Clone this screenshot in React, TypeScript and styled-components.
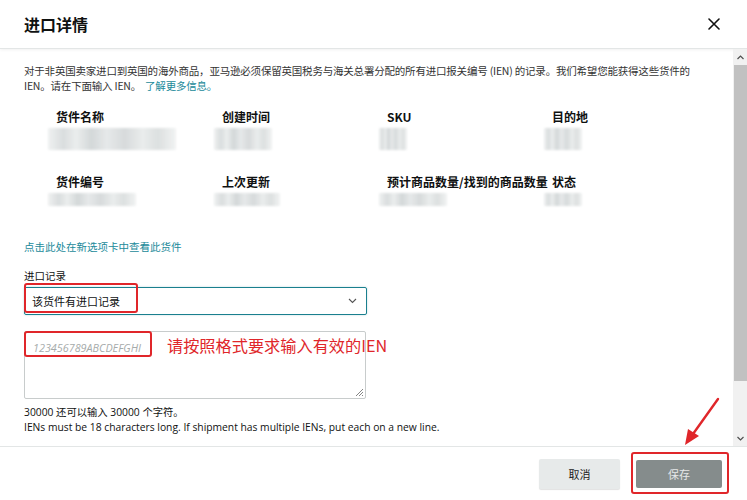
import React from 'react';
import styled, { createGlobalStyle } from 'styled-components';

const GlobalStyle = createGlobalStyle`
  html, body {
    margin: 0;
    padding: 0;
    background: #ffffff;
  }
  body {
    font-family: "Noto Sans CJK SC", "Noto Sans", sans-serif;
    color: #0f1111;
  }
`;

const Dialog = styled.div`
  position: relative;
  width: 747px;
  height: 500px;
  display: flex;
  flex-direction: column;
  overflow: hidden;
  background: #fff;
`;

const Header = styled.header`
  height: 48px;
  flex: none;
  display: flex;
  align-items: center;
  justify-content: space-between;
  padding: 0 26px 0 24px;
  border-bottom: 1px solid #e3e6e6;
  box-shadow: 0 1px 3px rgba(0, 0, 0, 0.06);
`;

const Title = styled.h1`
  margin: 0;
  font-size: 16px;
  font-weight: 700;
  color: #0f1111;
`;

const CloseButton = styled.button`
  border: 0;
  background: none;
  padding: 0;
  width: 14px;
  height: 14px;
  display: flex;
  align-items: center;
  justify-content: center;
`;

const BodyRow = styled.div`
  flex: 1;
  display: flex;
  min-height: 0;
  border-bottom: 1px solid #e3e6e6;
`;

const Content = styled.div`
  flex: 1;
  padding: 14px 18px 0 24px;
`;

const Scrollbar = styled.div`
  width: 13px;
  flex: none;
  display: flex;
  flex-direction: column;
  align-items: stretch;
  background: #f1f1f1;
  padding-left: 1px;
`;

const ScrollArrow = styled.div`
  height: 16px;
  display: flex;
  align-items: center;
  justify-content: center;
`;

const ScrollThumb = styled.div`
  height: 316px;
  background: #c1c1c1;
`;

const ScrollTrack = styled.div`
  flex: 1;
`;

const Intro = styled.p`
  margin: 0;
  font-size: 10.5px;
  line-height: 15px;
  color: #333;
  letter-spacing: -0.2px;
`;

const Link = styled.a`
  color: #1b8a9a;
  text-decoration: none;
  cursor: pointer;
`;

const IntroLink = styled(Link)`
  margin-left: 4px;
`;

const InfoGrid = styled.div`
  display: grid;
  grid-template-columns: 166px 165px 165px 150px;
  row-gap: 24px;
  margin: 16px 0 0 32px;
`;

const InfoCell = styled.div`
  display: flex;
  flex-direction: column;
  gap: 3px;
`;

const InfoLabel = styled.div`
  font-size: 12px;
  font-weight: 700;
  line-height: 16px;
  color: #0f1111;
  white-space: nowrap;
`;

const Blur = styled.div<{ $w: number; $h: number }>`
  width: ${(p) => p.$w}px;
  height: ${(p) => p.$h}px;
  margin-left: -8px;
  background:
    linear-gradient(90deg,
      #eef0f0 0%, #d6dadb 12%, #e9ecec 22%, #cfd4d5 34%,
      #e4e7e8 46%, #d3d7d8 60%, #e8ebeb 74%, #d9dddd 86%, #f0f2f2 100%);
  filter: blur(1.2px);
  opacity: 0.9;
`;

const ViewLink = styled(Link)`
  display: block;
  margin-top: 33px;
  font-size: 10.5px;
  line-height: 15px;
`;

const FieldLabel = styled.div`
  margin-top: 14px;
  font-size: 10.5px;
  line-height: 15px;
  color: #0f1111;
`;

const Select = styled.div`
  margin-top: 4px;
  width: 343px;
  height: 28px;
  box-sizing: border-box;
  border: 1.5px solid #1a7f8e;
  border-radius: 2px;
  display: flex;
  align-items: center;
  justify-content: space-between;
  padding: 0 9px 0 7px;
  font-size: 11px;
  color: #0f1111;
  box-shadow: 0 0 2px rgba(0, 113, 133, 0.3);
`;

const TextArea = styled.div`
  position: relative;
  margin-top: 16px;
  width: 342px;
  height: 68px;
  box-sizing: border-box;
  border: 1px solid #c8cccc;
  border-radius: 2px;
  padding: 6px 8px;
  line-height: 14px;
`;

const Placeholder = styled.span`
  font-family: "Open Sans", "Noto Sans", sans-serif;
  font-style: italic;
  font-size: 10.8px;
  color: #a6abab;
`;

const Grip = styled.svg`
  position: absolute;
  right: 1px;
  bottom: 1px;
`;

const Helper = styled.div`
  margin-top: 6px;
  font-size: 10.3px;
  line-height: 15px;
  color: #0f1111;
  font-family: "Open Sans", "Noto Sans CJK SC", sans-serif;
`;

const Footer = styled.footer`
  height: 53px;
  flex: none;
  display: flex;
  align-items: center;
  justify-content: flex-end;
  gap: 16px;
  padding: 0 25px 0 0;
`;

const Button = styled.button<{ $primary?: boolean }>`
  height: ${(p) => (p.$primary ? 28 : 30)}px;
  width: ${(p) => (p.$primary ? 86 : 81)}px;
  border: 0;
  border-radius: 2px;
  font-family: "Noto Sans CJK SC", sans-serif;
  font-size: 11px;
  background: ${(p) => (p.$primary ? '#858c8c' : '#e7eaea')};
  color: ${(p) => (p.$primary ? '#e6e8e8' : '#222')};
  box-shadow: ${(p) => (p.$primary ? 'none' : '0 1px 1px rgba(0,0,0,0.12)')};
`;

const Mark = styled.div<{ $x: number; $y: number; $w: number; $h: number }>`
  position: absolute;
  left: ${(p) => p.$x}px;
  top: ${(p) => p.$y}px;
  width: ${(p) => p.$w}px;
  height: ${(p) => p.$h}px;
  box-sizing: border-box;
  border: 2px solid #e0262a;
  border-radius: 3px;
  pointer-events: none;
`;

const Note = styled.div`
  position: absolute;
  left: 167px;
  top: 333px;
  font-size: 16.2px;
  line-height: 24px;
  color: #e0262a;
  white-space: nowrap;
`;

const Arrow = styled.svg`
  position: absolute;
  left: 676px;
  top: 396px;
  pointer-events: none;
`;

const info = [
  { label: '货件名称', w: 128, h: 22 },
  { label: '创建时间', w: 58, h: 22 },
  { label: 'SKU', w: 28, h: 22 },
  { label: '目的地', w: 38, h: 22 },
  { label: '货件编号', w: 88, h: 13 },
  { label: '上次更新', w: 66, h: 13 },
  { label: '预计商品数量/找到的商品数量', w: 68, h: 13 },
  { label: '状态', w: 38, h: 13 },
];

export default function App() {
  return (
    <>
      <GlobalStyle />
      <Dialog>
        <Header>
          <Title>进口详情</Title>
          <CloseButton aria-label="关闭">
            <svg width="12" height="12" viewBox="0 0 12 12">
              <path d="M1 1 L11 11 M11 1 L1 11" stroke="#111" strokeWidth="1.6" strokeLinecap="round" />
            </svg>
          </CloseButton>
        </Header>
        <BodyRow>
          <Content>
            <Intro>
              对于非英国卖家进口到英国的海外商品，亚马逊必须保留英国税务与海关总署分配的所有进口报关编号 (IEN) 的记录。我们希望您能获得这些货件的 IEN。请在下面输入 IEN。<IntroLink>了解更多信息。</IntroLink>
            </Intro>
            <InfoGrid>
              {info.map((it) => (
                <InfoCell key={it.label}>
                  <InfoLabel>{it.label}</InfoLabel>
                  <Blur $w={it.w} $h={it.h} />
                </InfoCell>
              ))}
            </InfoGrid>
            <ViewLink>点击此处在新选项卡中查看此货件</ViewLink>
            <FieldLabel>进口记录</FieldLabel>
            <Select>
              <span>该货件有进口记录</span>
              <svg width="9" height="6" viewBox="0 0 9 6">
                <path d="M1 1 L4.5 4.5 L8 1" fill="none" stroke="#555" strokeWidth="1.1" />
              </svg>
            </Select>
            <TextArea>
              <Placeholder>123456789ABCDEFGHI</Placeholder>
              <Grip width="9" height="9" viewBox="0 0 9 9">
                <path d="M8 1 L1 8 M8 4 L4 8 M8 7 L7 8" stroke="#777" strokeWidth="0.9" />
              </Grip>
            </TextArea>
            <Helper>
              30000 还可以输入 30000 个字符。
              <br />
              IENs must be 18 characters long. If shipment has multiple IENs, put each on a new line.
            </Helper>
          </Content>
          <Scrollbar>
            <ScrollArrow>
              <svg width="7" height="5" viewBox="0 0 7 5">
                <path d="M0.5 4 L3.5 1 L6.5 4" fill="none" stroke="#505050" strokeWidth="1.2" />
              </svg>
            </ScrollArrow>
            <ScrollThumb />
            <ScrollTrack />
            <ScrollArrow>
              <svg width="7" height="5" viewBox="0 0 7 5">
                <path d="M0.5 1 L3.5 4 L6.5 1" fill="none" stroke="#505050" strokeWidth="1.2" />
              </svg>
            </ScrollArrow>
          </Scrollbar>
        </BodyRow>
        <Footer>
          <Button>取消</Button>
          <Button $primary>保存</Button>
        </Footer>

        <Mark $x={24} $y={283} $w={114} $h={30} />
        <Mark $x={24} $y={331} $w={128} $h={26} />
        <Note>请按照格式要求输入有效的IEN</Note>
        <Mark $x={631} $y={452} $w={98} $h={42} />
        <Arrow width="46" height="52" viewBox="0 0 46 52">
          <path d="M42 3 L17 38" stroke="#e0262a" strokeWidth="2.4" strokeLinecap="round" />
          <path d="M9 49 L12 33 L23 40 Z" fill="#e0262a" />
        </Arrow>
      </Dialog>
    </>
  );
}
